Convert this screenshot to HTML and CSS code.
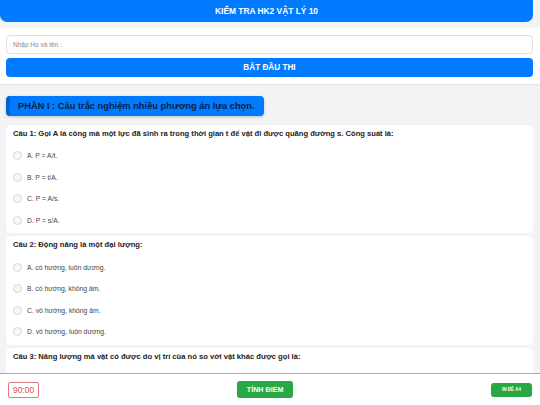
FILE: index.html
```html
<!DOCTYPE html>
<html lang="vi">
<head>
  <meta charset="UTF-8" />
  <meta name="viewport" content="width=device-width, initial-scale=1.0"/>
  <title>Kiểm tra HK2 Vật lý 10</title>
  <link rel="stylesheet" href="styles.css">
</head>
<body>
  <header class="top">
    <h1>KIỂM TRA HK2 VẬT LÝ 10</h1>
  </header>

  <section class="start">
    <input type="text" class="name-input" placeholder="Nhập Họ và tên :">
    <button class="btn-start">BẮT ĐẦU THI</button>
  </section>

  <div class="quiz">
    <div class="part-title">PHẦN I : Câu trắc nghiệm nhiều phương án lựa chọn.</div>

    <div class="question">
      <h3>Câu 1: Gọi A là công mà một lực đã sinh ra trong thời gian t để vật đi được quãng đường s. Công suất là:</h3>
      <label class="option"><input type="radio" name="q1"><span>A. P = A/t.</span></label>
      <label class="option"><input type="radio" name="q1"><span>B. P = t/A.</span></label>
      <label class="option"><input type="radio" name="q1"><span>C. P = A/s.</span></label>
      <label class="option"><input type="radio" name="q1"><span>D. P = s/A.</span></label>
    </div>

    <div class="question">
      <h3>Câu 2: Động năng là một đại lượng:</h3>
      <label class="option"><input type="radio" name="q2"><span>A. có hướng, luôn dương.</span></label>
      <label class="option"><input type="radio" name="q2"><span>B. có hướng, không âm.</span></label>
      <label class="option"><input type="radio" name="q2"><span>C. vô hướng, không âm.</span></label>
      <label class="option"><input type="radio" name="q2"><span>D. vô hướng, luôn dương.</span></label>
    </div>

    <div class="question">
      <h3>Câu 3: Năng lượng mà vật có được do vị trí của nó so với vật khác được gọi là:</h3>
      <label class="option"><input type="radio" name="q3"><span>A. thế năng.</span></label>
    </div>
  </div>

  <footer class="bottom-bar">
    <div class="timer">90:00</div>
    <button class="btn-green btn-score">TÍNH ĐIỂM</button>
    <button class="btn-green btn-print">IN ĐỀ A4</button>
  </footer>
</body>
</html>
```

FILE: styles.css
```css
body {
  margin: 0;
  font-family: "Liberation Sans", Arial, sans-serif;
  background-color: #f1f3f4;
  color: #333;
}
.top {
  background-color: #007bff;
  color: white;
  height: 22px;
  margin-right: 7px;
  border-radius: 0 0 7px 7px;
  display: flex;
  align-items: center;
  justify-content: center;
}
.top h1 {
  margin: 0;
  font-size: 8.4px;
  font-weight: bold;
}
.start {
  background: white;
  margin-top: 6px;
  padding: 7px 6px 7px 6px;
  border-bottom: 1px solid #e6e6e6;
}
.name-input {
  display: block;
  box-sizing: border-box;
  width: calc(100% - 1px);
  height: 19px;
  border: 1px solid #ddd;
  border-radius: 4px;
  padding: 0 6px;
  font-family: inherit;
  font-size: 6.5px;
}
.name-input::placeholder {
  color: #888;
}
.btn-start {
  display: block;
  width: calc(100% - 1px);
  height: 19px;
  margin-top: 4px;
  background-color: #007bff;
  color: white;
  border: none;
  border-radius: 4px;
  font-family: inherit;
  font-size: 8.2px;
  font-weight: bold;
}
.quiz {
  padding: 10px 7px 4px 6px;
}
.part-title {
  display: inline-block;
  background-color: #007bff;
  border-left: 4px solid #0062cc;
  border-radius: 4px;
  color: #0b1f3f;
  font-size: 9.3px;
  font-weight: bold;
  padding: 5px 9px 5px 8px;
  box-shadow: 0 1px 3px rgba(0,0,0,0.2);
}
.question {
  background: white;
  border-radius: 5px;
  padding: 4px 7px 2px 7px;
  margin-top: 9px;
}
.question + .question {
  margin-top: 3px;
}
.question h3 {
  margin: 0 0 6px 0;
  font-size: 7.6px;
  line-height: 10px;
  color: #222;
}
.option {
  display: flex;
  align-items: center;
  height: 21.6px;
  font-size: 6.8px;
  color: #444;
}
.option input {
  appearance: none;
  width: 9px;
  height: 9px;
  margin: 0 5px 0 0;
  border: 1px solid #d6d6d6;
  border-radius: 50%;
  background: #f7f7f7;
}
.bottom-bar {
  position: fixed;
  left: 0;
  right: 0;
  bottom: 0;
  height: 31px;
  background: white;
  border-top: 1px solid #7fb2ee;
  display: flex;
  align-items: center;
  justify-content: space-between;
  padding: 0 8px;
}
.timer {
  border: 1px solid #e07a7a;
  border-radius: 2px;
  color: #d9534f;
  font-size: 8.5px;
  padding: 2px 4px;
}
.btn-green {
  background-color: #28a745;
  color: white;
  border: none;
  border-radius: 3px;
  font-family: inherit;
  font-weight: bold;
}
.btn-score {
  font-size: 7.2px;
  width: 56px;
  height: 17px;
}
.btn-print {
  font-size: 4.5px;
  width: 41px;
  height: 14px;
}
```
